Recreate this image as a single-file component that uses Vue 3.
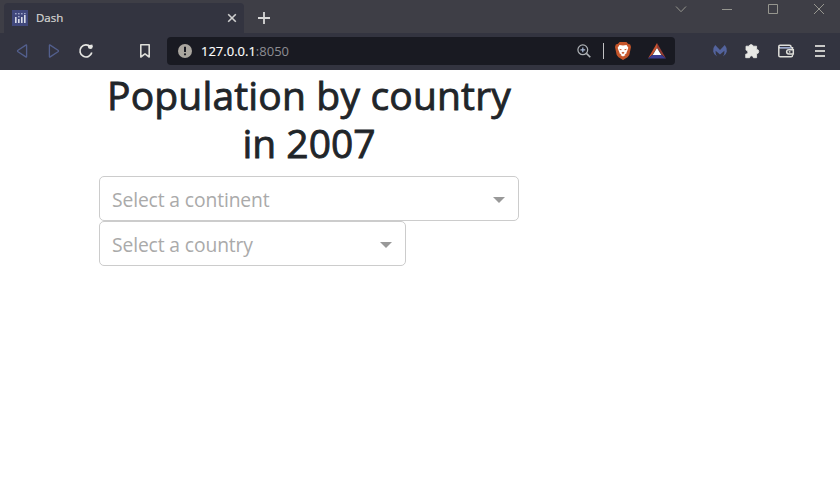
<script setup>
const selects = [
  { id: 'continent', label: 'Select a continent' },
  { id: 'country', label: 'Select a country' },
]
</script>

<template>
  <div class="window">
    <header class="tabstrip">
      <div class="tab">
        <svg class="favicon" width="16" height="16" viewBox="0 0 16 16">
          <rect width="16" height="16" fill="#41487c" />
          <g fill="#d9dce8">
            <rect x="3" y="7" width="1.6" height="6" />
            <rect x="6" y="9" width="1.6" height="4" />
            <rect x="9" y="7" width="1.6" height="6" />
            <rect x="12" y="5" width="1.6" height="8" />
          </g>
          <g fill="#9ea5c8">
            <rect x="3" y="3" width="1.6" height="1.4" />
            <rect x="6" y="3" width="1.6" height="1.4" />
            <rect x="6" y="6" width="1.6" height="1.4" />
            <rect x="9" y="3" width="1.6" height="1.4" />
            <rect x="12" y="3" width="1.6" height="1.2" />
          </g>
        </svg>
        <span class="tab-title">Dash</span>
        <svg class="tab-close" width="10" height="10" viewBox="0 0 10 10">
          <path d="M1.2 1.2 8.8 8.8M8.8 1.2 1.2 8.8" stroke="#d0d0d0" stroke-width="1.6" />
        </svg>
      </div>
      <svg class="new-tab" width="12" height="12" viewBox="0 0 12 12">
        <path d="M6 0V12M0 6H12" stroke="#d8d8d8" stroke-width="1.8" />
      </svg>
      <div class="controls">
        <svg width="12" height="12" viewBox="0 0 12 12"><path d="M1 3.5 6 8.7 11 3.5" /></svg>
        <svg width="12" height="12" viewBox="0 0 12 12"><path d="M1 6.5H11" /></svg>
        <svg width="12" height="12" viewBox="0 0 12 12"><path d="M1.5 1.5H10.5V10.5H1.5Z" /></svg>
        <svg width="12" height="12" viewBox="0 0 12 12"><path d="M1 1 11 11M11 1 1 11" /></svg>
      </div>
    </header>

    <nav class="toolbar">
      <div class="slot">
        <svg width="16" height="16" viewBox="0 0 16 16">
          <path d="M12.6 2.5V13.5Q12.6 14.4 11.8 13.9L4 8.7Q3 8 4 7.3L11.8 2.1Q12.6 1.6 12.6 2.5Z" fill="none" stroke="#535f8d" stroke-width="1.3" />
        </svg>
      </div>
      <div class="slot">
        <svg width="16" height="16" viewBox="0 0 16 16">
          <path d="M3.4 2.5V13.5Q3.4 14.4 4.2 13.9L12 8.7Q13 8 12 7.3L4.2 2.1Q3.4 1.6 3.4 2.5Z" fill="none" stroke="#535f8d" stroke-width="1.3" />
        </svg>
      </div>
      <div class="slot">
        <svg width="16" height="16" viewBox="0 0 16 16">
          <path d="M12.5 4A6 6 0 1 0 13.8 9.5" fill="none" stroke="#e6e6e2" stroke-width="1.7" />
          <path d="M10.2 2.2 14.3 1.4 14.8 3.4Q14.5 6 12.6 6.1 10 6 9.8 3.8Z" fill="#e6e6e2" />
        </svg>
      </div>
      <div class="slot bookmark">
        <svg width="16" height="16" viewBox="0 0 16 16">
          <path d="M3.8 1.8H12.2V14L8 10.8 3.8 14Z" fill="none" stroke="#deded9" stroke-width="1.6" stroke-linejoin="round" />
        </svg>
      </div>
      <div class="address">
        <svg class="info" width="14" height="14" viewBox="0 0 14 14">
          <circle cx="7" cy="7" r="7" fill="#aaa69f" />
          <path d="M7 2.8V8" stroke="#191a22" stroke-width="2" />
          <circle cx="7" cy="10.3" r="1.1" fill="#191a22" />
        </svg>
        <span class="url"><span class="host">127.0.0.1</span>:8050</span>
        <svg class="zoom" width="14" height="14" viewBox="0 0 14 14" fill="none" stroke="#aeb2b6">
          <circle cx="5.8" cy="5.8" r="4.9" stroke-width="1.2" />
          <path d="M9.4 9.4 13.3 13.2" stroke-width="1.6" />
          <path d="M5.8 3.4V8.2M3.4 5.8H8.2" stroke="#a9b9d5" stroke-width="1.2" />
        </svg>
        <span class="divider"></span>
        <svg class="lion" width="16" height="18" viewBox="0 0 16 18">
          <path d="M4.5 0H11.5L13 1.7 15.2 2.6 16 5 14.3 13 12.5 15.3 8 18 3.5 15.3 1.7 13 0 5 .8 2.6 3 1.7Z" fill="#c4552a" />
          <path d="M4.5 3 8 3.5 11.5 3 13.3 5.8 12.4 8.5 11.6 10.2 11.4 11.6 9.6 12.2 10.6 13 8 14.6 5.4 13 6.4 12.2 4.6 11.6 4.4 10.2 3.6 8.5 2.7 5.8Z" fill="#fff" />
          <path d="M4.4 6.7 6.8 7.4 6.2 8.3 4.9 8ZM11.6 6.7 9.2 7.4 9.8 8.3 11.1 8ZM8 9.8 9.6 10.8 8 11.9 6.4 10.8Z" fill="#c4552a" />
        </svg>
        <svg class="bat" width="18" height="16" viewBox="0 0 18 16">
          <path d="M9 0 18 15.5 13.4 11.5 9 4.8Z" fill="#973d33" />
          <path d="M9 0V4.8L4.6 11.5 0 15.5Z" fill="#c9532f" />
          <path d="M4.2 12H13.8L18 15.5H0Z" fill="#3c3d91" />
          <path d="M9 5 13.3 12H4.7Z" fill="#fff" />
        </svg>
      </div>
      <div class="extensions">
        <div class="slot">
          <svg width="16" height="16" viewBox="0 0 16 16">
            <path d="M3.2 2 8 7.1 12.8 2Q15.4 5 14.8 8.6 14.2 12 11 13.5 12.8 11 12.4 7.7L8 11.5 3.6 7.7Q3.2 11 5 13.5 1.8 12 1.2 8.6.6 5 3.2 2Z" fill="#53639d" />
          </svg>
        </div>
        <div class="slot">
          <svg width="16" height="16" viewBox="0 0 16 16">
            <path d="M2 3.2H5.1A2.05 2.05 0 0 1 9.1 3.2H12.6V6.4A2.05 2.05 0 0 1 12.6 10.7V14.7H9.4A1.9 1.9 0 0 0 5.6 14.7H1.7V11.2A2 2 0 0 0 2 7.1Z" fill="#e8e8e5" stroke="#e8e8e5" stroke-width=".8" stroke-linejoin="round" />
          </svg>
        </div>
        <div class="slot wallet">
          <svg width="18" height="16" viewBox="0 0 18 16" fill="none" stroke="#deded9" stroke-width="1.5">
            <path d="M15.5 6.2V4.8H3Q1.8 4.8 1.8 3.5 1.8 2.3 3 2.3H12.2Q14 2.3 14 4M1.8 3.5V12.4Q1.8 13.7 3.1 13.7H14.2Q15.5 13.7 15.5 12.4V11.5" />
            <path d="M16.3 6.7H11.8A2 2 0 0 0 11.8 11H16.3Z" />
            <path d="M3 4.8H14" stroke="#7c91c9" stroke-width="1" />
            <path d="M11.8 8.9H13.4" />
          </svg>
        </div>
        <div class="slot menu">
          <svg width="16" height="16" viewBox="0 0 16 16">
            <path d="M3 3H13M3 8H13M3 13H13" stroke="#c9c9c7" stroke-width="1.8" />
          </svg>
        </div>
      </div>
    </nav>

    <main class="page">
      <h1><span class="line-one">Population by country</span> <span class="line-two">in 2007</span></h1>
      <div v-for="s in selects" :key="s.id" class="select" :class="s.id">
        <span class="placeholder">{{ s.label }}</span>
        <span class="arrow"></span>
      </div>
    </main>
  </div>
</template>

<style>
body {
  background: #fff;
  overflow: hidden;
}
</style>

<style scoped>
.window {
  width: 840px;
  height: 504px;
  background: #fff;
  font-family: "Open Sans", "Noto Sans", sans-serif;
}
svg {
  display: block;
  flex: none;
}
.tabstrip {
  display: flex;
  height: 33px;
  background: #3e3e46;
  overflow: hidden;
}
.tab {
  display: flex;
  align-items: center;
  box-sizing: border-box;
  width: 240px;
  height: 30px;
  margin: 3px 0 0 4px;
  padding: 0 7px 0 8px;
  border-radius: 4px 4px 0 0;
  background: #333440;
}
.tab-title {
  margin-left: 8px;
  color: #d6d6d4;
  font-size: 11.5px;
  font-weight: 400;
  line-height: 16px;
  -webkit-text-stroke: 0.2px #d6d6d4;
}
.tab-close {
  margin-left: auto;
}
.new-tab {
  margin: 12px 0 0 14px;
}
.controls {
  display: flex;
  margin: 3px -2px 0 auto;
}
.controls svg {
  margin: 0 17px;
  fill: none;
  stroke: #96968f;
  stroke-width: 1;
}
.toolbar {
  display: flex;
  align-items: center;
  box-sizing: border-box;
  height: 37px;
  padding: 0 4px 1px 6px;
  background: #333440;
}
.slot {
  display: flex;
  justify-content: center;
  flex: none;
  width: 32px;
}
.bookmark {
  margin-left: 27px;
}
.address {
  display: flex;
  align-items: center;
  box-sizing: border-box;
  width: 508px;
  height: 28px;
  margin-left: 6px;
  padding: 0 9px 0 11px;
  border-radius: 4px;
  background: #191a22;
}
.url {
  margin-left: 9px;
  color: #8d8d93;
  font-size: 13px;
  line-height: 18px;
}
.host {
  color: #fff;
  -webkit-text-stroke: 0.15px #fff;
}
.zoom {
  margin-left: auto;
}
.divider {
  width: 1px;
  height: 16px;
  margin: 0 11px 0 12px;
  background: #c2c2c4;
}
.bat {
  margin-left: 17px;
}
.extensions {
  display: flex;
  align-items: center;
  margin-left: auto;
}
.wallet,
.menu {
  margin-left: 2px;
}
.page {
  width: 420px;
  margin-left: 99px;
  padding-top: 1px;
}
h1 {
  display: flex;
  flex-direction: column;
  align-items: center;
  margin: 0 0 9px;
  color: #212529;
  font-size: 39px;
  font-weight: 400;
  line-height: 48px;
  white-space: nowrap;
  -webkit-text-stroke: 0.85px #212529;
}
.line-one {
  letter-spacing: 0.17px;
}
.select {
  display: flex;
  align-items: center;
  justify-content: space-between;
  box-sizing: border-box;
  height: 45px;
  padding: 2px 13px 0 12px;
  border: 1px solid #ccc;
  border-radius: 5px;
}
.country {
  width: 307px;
}
.placeholder {
  color: #aaa;
  font-size: 19.3px;
  line-height: 30px;
  letter-spacing: -0.12px;
}
.arrow {
  border: 6.5px solid transparent;
  border-top: 6px solid #999;
  border-bottom: 0;
}
</style>
